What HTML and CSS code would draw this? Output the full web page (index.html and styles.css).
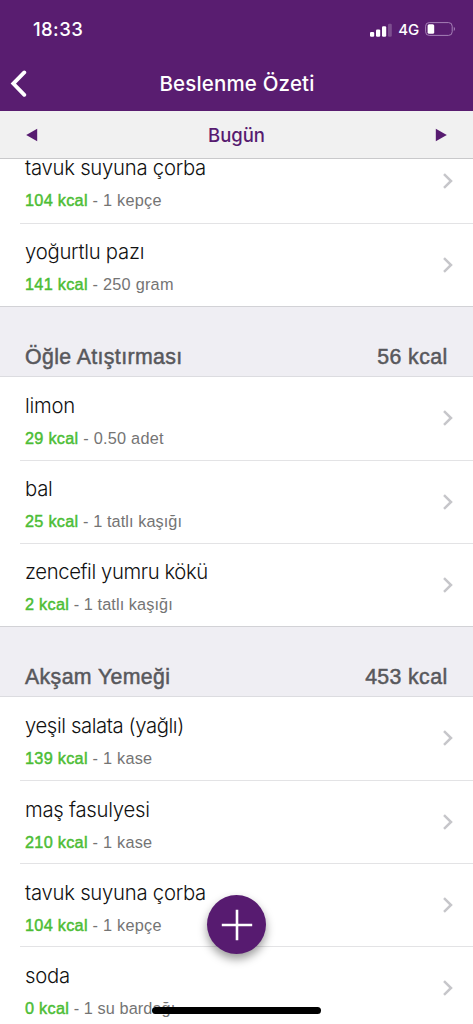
FILE: index.html
```html
<!DOCTYPE html>
<html lang="tr">
<head>
<meta charset="utf-8">
<title>Beslenme Özeti</title>
<link rel="stylesheet" href="styles.css">
</head>
<body>
<div class="screen">
  <header class="top">
    <div class="status">
      <span class="time">18:33</span>
      <div class="indicators">
        <svg class="signal" width="22" height="14" viewBox="0 0 22 14" fill="#fff"><rect x="0" y="8.9" width="4.2" height="4.9" rx="1.2"/><rect x="6" y="6.4" width="4.2" height="7.4" rx="1.2"/><rect x="12" y="3.2" width="4.2" height="10.6" rx="1.2"/><rect x="18" y=".8" width="3.8" height="13" rx="1.2" opacity=".22"/></svg>
        <span class="network">4G</span>
        <svg class="battery" width="31" height="14" viewBox="0 0 31 14"><rect x=".6" y=".6" width="26.6" height="12.8" rx="3.6" fill="none" stroke="#a681b7"/><rect x="2.6" y="2.3" width="6.6" height="9.4" rx="1.5" fill="#fff"/><path d="M28.8 4.8q2.4 2.2 0 4.4z" fill="#a681b7"/></svg>
      </div>
    </div>
    <div class="navbar">
      <svg class="back" width="18" height="28" viewBox="0 0 18 28"><path d="M15.3 2.4 4.3 13.6l11 11.2" fill="none" stroke="#fff" stroke-width="3.8" stroke-linecap="round" stroke-linejoin="miter"/></svg>
      <h1>Beslenme Özeti</h1>
    </div>
  </header>
  <nav class="day">
    <svg width="12" height="14" viewBox="0 0 12 14"><path d="M11.2 .8v12.4L.2 7z" fill="#571b70"/></svg>
    <span>Bugün</span>
    <svg width="12" height="14" viewBox="0 0 12 14"><path d="M.8 .8v12.4L11.8 7z" fill="#571b70"/></svg>
  </nav>
  <main class="viewport">
    <div class="list">
      <ul class="rows">
        <li><div class="food"><p class="name">tavuk suyuna çorba</p><p class="info"><b>104 kcal</b> - 1 kepçe</p></div><svg class="chev" viewBox="0 0 12 18"><path d="M2 2.2 9 9 2 15.8"/></svg></li>
        <li><div class="food"><p class="name">yoğurtlu pazı</p><p class="info"><b>141 kcal</b> - 250 gram</p></div><svg class="chev" viewBox="0 0 12 18"><path d="M2 2.2 9 9 2 15.8"/></svg></li>
      </ul>
      <div class="meal"><h2>Öğle Atıştırması</h2><span>56 kcal</span></div>
      <ul class="rows">
        <li><div class="food"><p class="name">limon</p><p class="info"><b>29 kcal</b> - 0.50 adet</p></div><svg class="chev" viewBox="0 0 12 18"><path d="M2 2.2 9 9 2 15.8"/></svg></li>
        <li><div class="food"><p class="name">bal</p><p class="info condensed"><b>25 kcal</b> - 1 tatlı kaşığı</p></div><svg class="chev" viewBox="0 0 12 18"><path d="M2 2.2 9 9 2 15.8"/></svg></li>
        <li><div class="food"><p class="name tight">zencefil yumru kökü</p><p class="info condensed"><b>2 kcal</b> - 1 tatlı kaşığı</p></div><svg class="chev" viewBox="0 0 12 18"><path d="M2 2.2 9 9 2 15.8"/></svg></li>
      </ul>
      <div class="meal"><h2>Akşam Yemeği</h2><span>453 kcal</span></div>
      <ul class="rows">
        <li><div class="food"><p class="name tight">yeşil salata (yağlı)</p><p class="info"><b>139 kcal</b> - 1 kase</p></div><svg class="chev" viewBox="0 0 12 18"><path d="M2 2.2 9 9 2 15.8"/></svg></li>
        <li><div class="food"><p class="name">maş fasulyesi</p><p class="info"><b>210 kcal</b> - 1 kase</p></div><svg class="chev" viewBox="0 0 12 18"><path d="M2 2.2 9 9 2 15.8"/></svg></li>
        <li><div class="food"><p class="name">tavuk suyuna çorba</p><p class="info"><b>104 kcal</b> - 1 kepçe</p></div><svg class="chev" viewBox="0 0 12 18"><path d="M2 2.2 9 9 2 15.8"/></svg></li>
        <li><div class="food"><p class="name">soda</p><p class="info condensed"><b>0 kcal</b> - 1 su bardağı</p></div><svg class="chev" viewBox="0 0 12 18"><path d="M2 2.2 9 9 2 15.8"/></svg></li>
      </ul>
    </div>
  </main>
  <button class="add" aria-label="Ekle"><svg width="32" height="32" viewBox="0 0 32 32"><path d="M16 .8v30.4M.8 16h30.4" stroke="#fff" stroke-width="2.6"/></svg></button>
  <div class="home"></div>
</div>
</body>
</html>
```
FILE: styles.css
```css
* { box-sizing: border-box; margin: 0; padding: 0; }
body { background: #fff; font-family: "Liberation Sans", Arial, sans-serif; }
.screen { position: relative; display: flex; flex-direction: column; width: 473px; height: 1024px; overflow: hidden; }
svg { display: block; flex: none; }

.top { height: 111px; flex: none; background: #591d70; color: #fff; font-family: Inter, sans-serif; }
.status { height: 56px; display: flex; align-items: center; justify-content: space-between; padding: 2px 17px 0 33px; }
.time { font-size: 18.5px; font-weight: 550; letter-spacing: .4px; }
.indicators { display: flex; align-items: center; }
.signal { margin-top: 1px; }
.network { margin: 1px 6px 0 6px; font-size: 15px; font-weight: 500; letter-spacing: -.1px; }
.navbar { height: 55px; display: grid; grid-template-columns: 40px 1fr 40px; align-items: center; padding-left: 9px; padding-right: 8px; }
.navbar h1 { font-size: 20.5px; font-weight: 550; text-align: center; letter-spacing: .17px; }

.day { height: 48px; flex: none; display: flex; align-items: center; justify-content: space-between; padding: 1px 26px 0 26px; background: #f1f1f1; border-bottom: 1px solid #c9c9cb; color: #571b70; font: 550 18.5px Inter, sans-serif; }

.viewport { flex: 1; min-height: 0; overflow: hidden; }
.list { margin-top: -19.6px; }
.rows { list-style: none; }
.rows li { display: flex; align-items: center; justify-content: space-between; height: 83.1px; margin-left: 20px; padding: 0 19px 0 5px; }
.rows li + li { border-top: 1px solid #e3e3e5; }
.food { padding-top: 5px; }
.name { font-family: Inter, sans-serif; font-weight: 300; font-size: 20.3px; letter-spacing: -.25px; line-height: 28px; color: #111; white-space: nowrap; }
.tight { letter-spacing: -.4px; }
.info { margin-top: 6px; font-size: 16.3px; letter-spacing: .24px; line-height: 24px; color: #747474; white-space: nowrap; }
.condensed { letter-spacing: .08px; }
.info b { color: #4cbd35; font-weight: 400; letter-spacing: .27px; -webkit-text-stroke: .45px #4cbd35; }
.chev { width: 12px; height: 18px; }
.chev path { fill: none; stroke: #c6c6ca; stroke-width: 2.5; }

.meal { height: 71px; display: flex; justify-content: space-between; padding: 36px 25.5px 0 25px; background: #efeef3; border-top: 1px solid #d2d2d6; border-bottom: 1px solid #dcdce0; color: #58585c; font-size: 21.3px; letter-spacing: .38px; line-height: 28px; -webkit-text-stroke: .5px #58585c; }
.meal h2 { font-size: inherit; font-weight: 400; }

.add { position: absolute; left: 207px; top: 895px; width: 59px; height: 59px; display: grid; place-items: center; border: 0; border-radius: 50%; background: #571b70; box-shadow: 0 5px 10px rgba(0,0,0,.4); }
.home { position: absolute; left: 152px; top: 1007px; width: 169px; height: 7px; border-radius: 4px; background: #000; }
```
